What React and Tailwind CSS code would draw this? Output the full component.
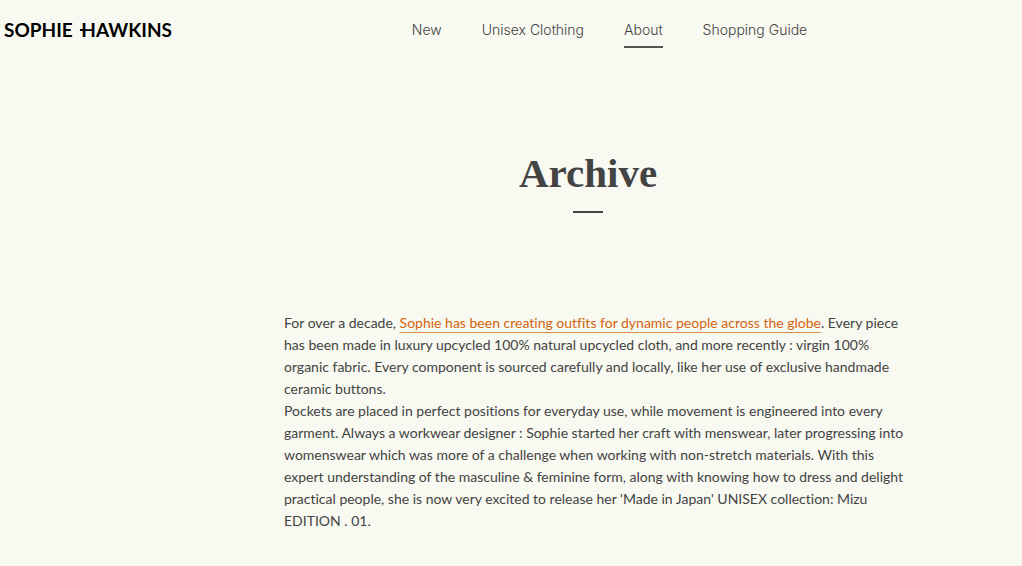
import React from "react";

const navItems = [
  { label: "New", href: "#new" },
  { label: "Unisex Clothing", href: "#unisex-clothing" },
  { label: "About", href: "#about", active: true },
  { label: "Shopping Guide", href: "#shopping-guide" },
];

const Header = () => {
  return (
    <header className="flex items-start pt-4">
      <div className="w-2/5 shrink-0 pl-1">
        <a
          href="#home"
          className="font-['Lato',sans-serif] text-[19px] leading-7 font-bold whitespace-nowrap text-black"
        >
          SOPHIE{" "}
          <span className="relative ml-1">
            H
            <span className="absolute top-[11px] -left-px h-0.5 w-[3px] bg-black" />
          </span>
          AWKINS
        </a>
      </div>
      <nav className="flex gap-10 pl-[3px]">
        {navItems.map((item) => (
          <a
            key={item.label}
            href={item.href}
            aria-current={item.active ? "page" : undefined}
            className={`border-b-2 pb-0.5 font-['Inter',sans-serif] text-sm leading-7 font-light whitespace-nowrap text-[#42423f] ${
              item.active ? "border-[#555552]" : "border-transparent"
            }`}
          >
            {item.label}
          </a>
        ))}
      </nav>
    </header>
  );
};

const App = () => {
  return (
    <div className="min-h-screen bg-[#f8f9f1]">
      <Header />
      <main className="pt-[99px] pr-28 pb-8 pl-[284px] text-[#434343]">
        <div className="flex flex-col items-center pr-[18px]">
          <h1 className="font-['Liberation_Serif',serif] text-[41px] leading-[52px] font-bold">
            Archive
          </h1>
          <span className="mt-3 h-0.5 w-[30px] bg-[#434343]" />
        </div>
        <div className="mt-[99px] font-['Lato',sans-serif] text-sm leading-[22px] [font-variant-ligatures:none]">
          <p>
            For over a decade,{" "}
            <a
              href="#story"
              className="text-[#d4640f] underline decoration-[#e08a45] decoration-1 underline-offset-4 [text-decoration-skip-ink:none]"
            >
              Sophie has been creating outfits for dynamic people across the globe
            </a>
            . Every piece has been made in luxury upcycled 100% natural upcycled cloth, and more
            recently : virgin 100% organic fabric. Every component is sourced carefully and
            locally, like her use of exclusive handmade ceramic buttons.
          </p>
          <p>
            Pockets are placed in perfect positions for everyday use, while movement is engineered
            into every garment. Always a workwear designer : Sophie started her craft with
            menswear, later progressing into womenswear which was more of a challenge when working
            with non-stretch materials. With this expert understanding of the masculine &amp;
            feminine form, along with knowing how to dress and delight practical people, she is now
            very excited to release her 'Made in Japan' UNISEX collection: Mizu EDITION . 01.
          </p>
        </div>
      </main>
    </div>
  );
};

export default App;
